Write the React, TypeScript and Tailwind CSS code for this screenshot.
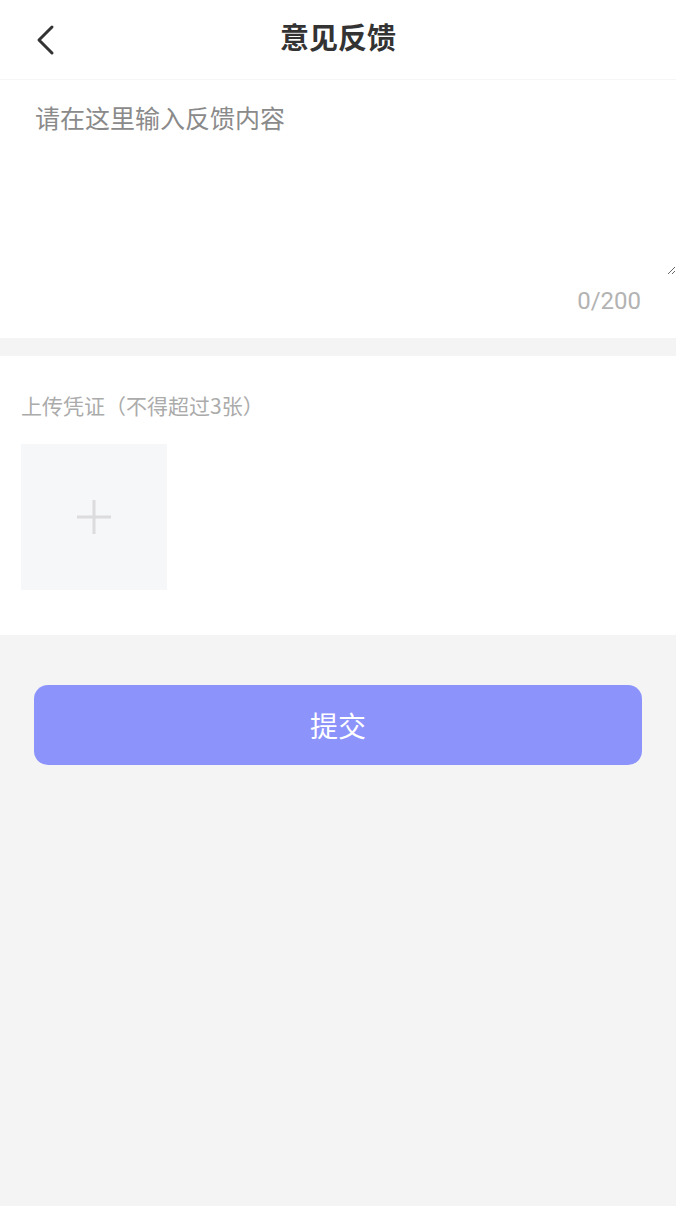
export default function App() {
  return (
    <div
      className="min-h-[1206px] bg-[#f4f4f4]"
      style={{ fontFamily: '"Noto Sans CJK SC", "Noto Sans", sans-serif' }}
    >
      {/* header */}
      <div className="grid h-[80px] grid-cols-[1fr_auto_1fr] items-center border-b border-[#f6f6f6] bg-white">
        <div className="pl-[34px]">
          <svg width="24" height="32" viewBox="0 0 24 32" fill="none">
            <path d="M18 3 L5 16 L18 29" stroke="#333" strokeWidth="3" strokeLinecap="round" strokeLinejoin="round" />
          </svg>
        </div>
        <h1 className="-mt-[5px] text-[29px] font-bold text-[#333]">意见反馈</h1>
        <div />
      </div>

      {/* feedback input */}
      <div className="bg-white pt-[17px] pb-[11px]">
        <textarea
          className="block h-[178px] w-full pl-[35px] pr-[20px] text-[25px] leading-[40px] text-[#333] outline-none placeholder:text-[#8a8a8a]"
          placeholder="请在这里输入反馈内容"
        />
        <div
          className="pr-[35px] text-right text-[24px] leading-[52px] text-[#b3b3b3]"
          style={{ fontFamily: 'Roboto, "Noto Sans", sans-serif' }}
        >
          0/200
        </div>
      </div>

      {/* upload */}
      <div className="mt-[18px] bg-white px-[21px] pt-[35px] pb-[45px]">
        <p className="text-[21px] leading-[28px] text-[#ababab]">上传凭证（不得超过3张）</p>
        <div className="mt-[25px] flex h-[146px] w-[146px] items-center justify-center bg-[#f6f7f9]">
          <svg width="36" height="36" viewBox="0 0 36 36">
            <path d="M18 1 V35 M1 18 H35" stroke="#dcdcdf" strokeWidth="3" />
          </svg>
        </div>
      </div>

      {/* submit */}
      <div className="px-[34px] pt-[50px]">
        <button className="flex h-[80px] w-full items-center justify-center rounded-[14px] bg-[#8c94fc] text-[28px] text-white">
          提交
        </button>
      </div>
    </div>
  );
}
